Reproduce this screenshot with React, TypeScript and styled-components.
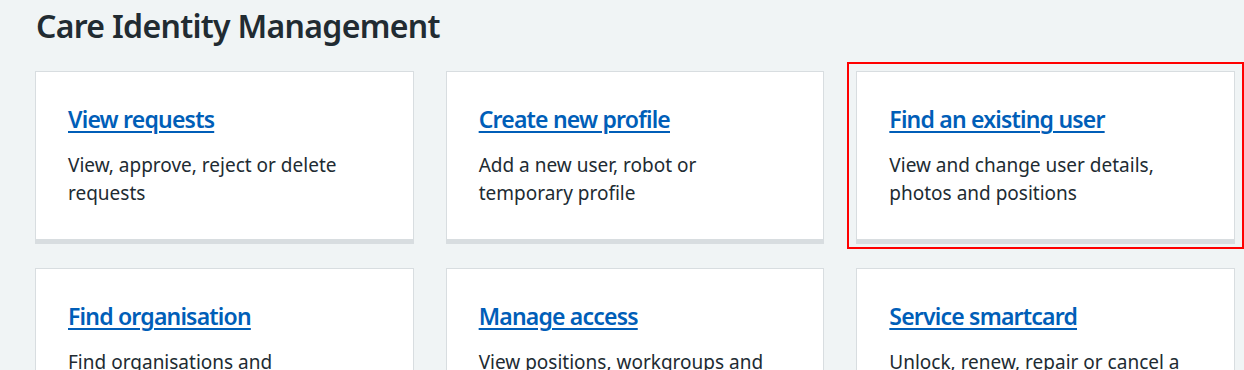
import React from "react";
import styled, { createGlobalStyle } from "styled-components";

const Global = createGlobalStyle`
  html, body { margin: 0; padding: 0; background: #f0f4f5; }
  body { font-family: "Noto Sans", "Liberation Sans", Arial, sans-serif; color: #212b32; }
  * { box-sizing: border-box; }
`;

const Page = styled.main`
  width: 1200px;
  margin: 0 0 0 35px;
  padding-top: 6px;
`;

const Title = styled.h1`
  margin: 0 0 25px 1px;
  font-size: 32px;
  line-height: 40px;
  font-weight: 600;
  letter-spacing: -0.7px;
  color: #212b32;
`;

const Grid = styled.div`
  display: grid;
  grid-template-columns: repeat(3, 1fr);
  column-gap: 32px;
  row-gap: 28px;
`;

const Card = styled.div<{ $focused?: boolean }>`
  position: relative;
  background: #ffffff;
  border: 1px solid #d8dde0;
  box-shadow: 0 4px 0 #d8dde0;
  padding: 31px 32px 32px;
  min-height: 169px;
  outline: ${(p) => (p.$focused ? "2px solid #ff0000" : "none")};
  outline-offset: 7px;
`;

const CardHeading = styled.h2`
  margin: 0 0 16px;
  font-size: 23px;
  line-height: 32px;
  font-weight: 600;
  letter-spacing: -0.8px;
`;

const CardLink = styled.a`
  color: #005eb8;
  text-decoration: underline;
  text-underline-offset: 3px;
  text-decoration-thickness: 2px;
`;

const CardText = styled.p`
  margin: 0;
  font-size: 19px;
  line-height: 28px;
  color: #212b32;
`;

const cards = [
  { title: "View requests", text: "View, approve, reject or delete requests" },
  { title: "Create new profile", text: "Add a new user, robot or temporary profile" },
  { title: "Find an existing user", text: "View and change user details, photos and positions", focused: true },
  { title: "Find organisation", text: "Find organisations and organisational hierarchies" },
  { title: "Manage access", text: "View positions, workgroups and activities" },
  { title: "Service smartcard", text: "Unlock, renew, repair or cancel a smartcard" },
];

export default function App() {
  return (
    <>
      <Global />
      <Page>
        <Title>Care Identity Management</Title>
        <Grid>
          {cards.map((c) => (
            <Card key={c.title} $focused={c.focused}>
              <CardHeading>
                <CardLink href="#">{c.title}</CardLink>
              </CardHeading>
              <CardText>{c.text}</CardText>
            </Card>
          ))}
        </Grid>
      </Page>
    </>
  );
}
